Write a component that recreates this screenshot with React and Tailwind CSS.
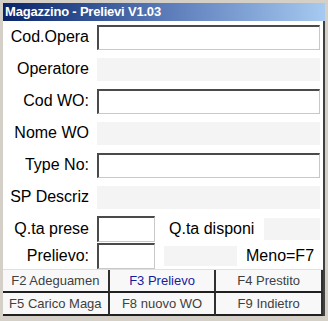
const inputBox = 'bg-white border-t-2 border-l-2 border-t-[#4a4a4a] border-l-[#4a4a4a] border-b border-r border-b-[#c8c8c8] border-r-[#c8c8c8]'
const grayBox = 'bg-[#f4f4f4]'

const Label = ({ children }) => (
  <div className="w-[86px] shrink-0 text-right text-[16px] leading-none text-black">{children}</div>
)

const Row = ({ label, kind }) => (
  <div className="flex items-center h-[32px]">
    <Label>{label}</Label>
    <div className={`ml-[8px] w-[223px] ${kind === 'input' ? `h-[25px] ${inputBox}` : `h-[23px] ${grayBox}`}`} />
  </div>
)

const Btn = ({ children, blue }) => (
  <div
    className={`flex-1 h-[23px] flex items-center justify-center text-[13px] border-r-2 border-b-2 border-r-[#303030] border-b-[#202020] bg-[#f8f8f8] ${blue ? 'text-[#1a1aa0]' : 'text-[#404040]'}`}
  >
    {children}
  </div>
)

export default function App() {
  return (
    <div className="w-[328px] h-[321px] bg-[#d4d0c8] pt-[3px] pl-[3px] pr-[3px] pb-[5px] flex flex-col" style={{ fontFamily: '"Liberation Sans", Arial, sans-serif' }}>
      <div className="h-[18px] shrink-0 flex items-center pl-[2px] bg-gradient-to-r from-[#0a246a] via-[#5a7ab8] to-[#a6caf0]">
        <span className="text-white font-bold text-[13px] tracking-[-0.2px]">Magazzino - Prelievi V1.03</span>
      </div>
      <div className="flex-1 bg-white border-r-2 border-r-[#404040] flex flex-col">
        <Row label="Cod.Opera" kind="input" />
        <Row label="Operatore" kind="gray" />
        <Row label="Cod WO:" kind="input" />
        <Row label="Nome WO" kind="gray" />
        <Row label="Type No:" kind="input" />
        <Row label="SP Descriz" kind="gray" />
        <div className="flex items-end h-[29px]">
          <div className="h-[26px] flex items-center"><Label>Q.ta prese</Label></div>
          <div className={`ml-[8px] w-[58px] h-[26px] ${inputBox}`} />
          <div className="self-center mt-[3px] ml-[14px] w-[90px] text-[16px] leading-none whitespace-nowrap">Q.ta disponi</div>
          <div className={`self-center mt-[3px] ml-[5px] w-[56px] h-[22px] ${grayBox}`} />
        </div>
        <div className="flex items-center h-[27px]">
          <Label>Prelievo:</Label>
          <div className={`ml-[8px] w-[58px] h-[26px] ${inputBox}`} />
          <div className={`ml-[9px] w-[73px] h-[20px] ${grayBox}`} />
          <div className="ml-[9px] text-[16px] leading-none whitespace-nowrap">Meno=F7</div>
        </div>
        <div className="flex border-t border-t-[#e0e0e0]">
          <Btn>F2 Adeguamen</Btn>
          <Btn blue>F3 Prelievo</Btn>
          <Btn>F4 Prestito</Btn>
        </div>
        <div className="flex">
          <Btn>F5 Carico Maga</Btn>
          <Btn>F8 nuovo WO</Btn>
          <Btn>F9 Indietro</Btn>
        </div>
      </div>
    </div>
  )
}
